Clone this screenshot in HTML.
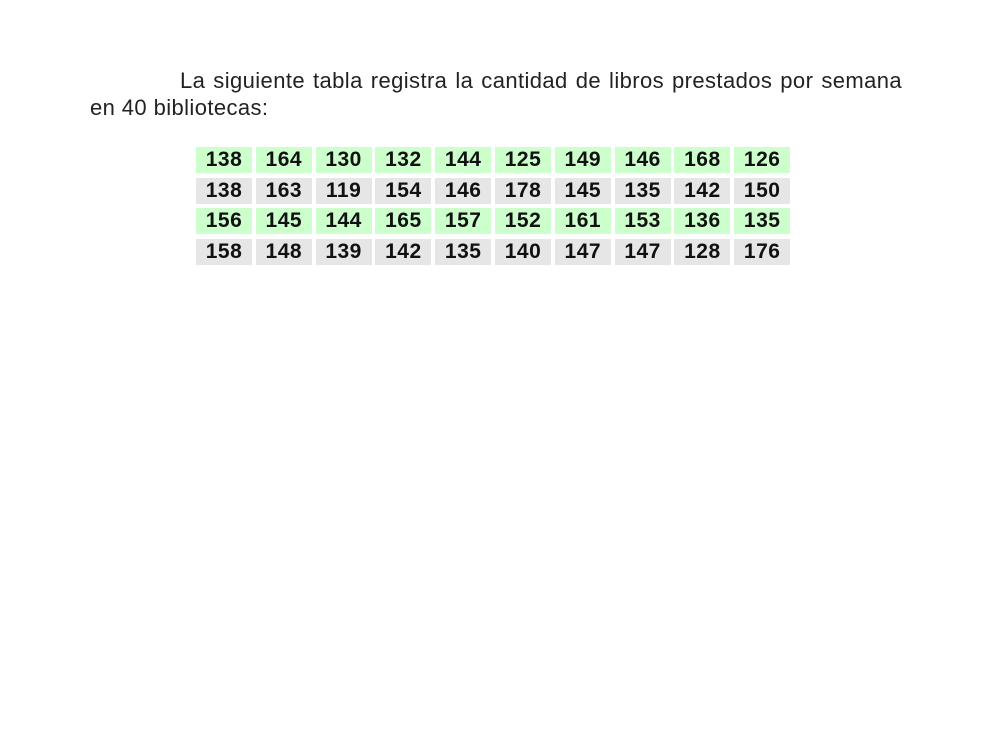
<!DOCTYPE html>
<html><head><meta charset="utf-8"><style>
html,body{margin:0;padding:0;background:#fff;width:1000px;height:738px;overflow:hidden;}
body{position:relative;font-family:"Liberation Sans",sans-serif;}
.l{position:absolute;font-size:22px;line-height:27px;color:#222;white-space:nowrap;letter-spacing:0.4px;}
.l1{left:180px;width:722px;top:67px;text-align:justify;text-align-last:justify;}
.l2{left:90px;top:94px;}
.c{position:absolute;width:56px;height:26px;line-height:26px;text-align:center;font-weight:bold;font-size:21px;letter-spacing:0.5px;color:#111;}
.g{background:#ccffcc;}
.y{background:#e6e6e6;}
</style></head><body>
<div class="l l1">La siguiente tabla registra la cantidad de libros prestados por semana</div>
<div class="l l2">en 40 bibliotecas:</div>
<div id="t"></div>
<script>
var d=[[138,164,130,132,144,125,149,146,168,126],[138,163,119,154,146,178,145,135,142,150],[156,145,144,165,157,152,161,153,136,135],[158,148,139,142,135,140,147,147,128,176]];
var h='';
for(var r=0;r<4;r++)for(var i=0;i<10;i++){
h+='<div class="c '+(r%2?'y':'g')+'" style="left:'+(196+i*59.8).toFixed(1)+'px;top:'+(147+r*30.7).toFixed(1)+'px">'+d[r][i]+'</div>';}
document.getElementById('t').innerHTML=h;
</script>
</body></html>
